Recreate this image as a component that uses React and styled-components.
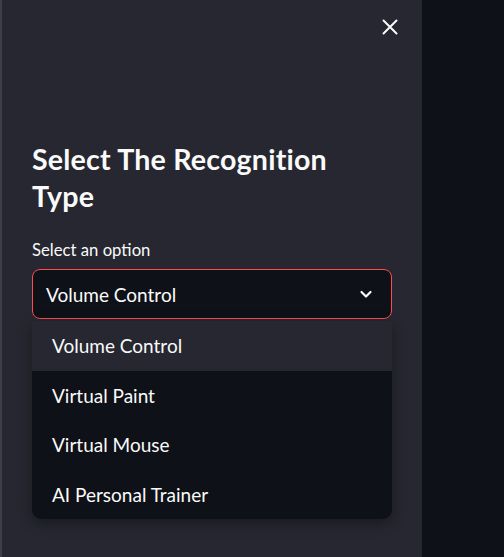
import styled, { createGlobalStyle } from "styled-components";

const Global = createGlobalStyle`
  html, body {
    margin: 0;
    padding: 0;
    background: #0e1117;
  }
  body {
    font-family: "Lato", "Noto Sans", sans-serif;
    color: #fafafa;
  }
`;

const options = ["Volume Control", "Virtual Paint", "Virtual Mouse", "AI Personal Trainer"];

export default function App() {
  return (
    <>
      <Global />
      <Page>
        <Edge />
        <Sidebar>
          <CloseRow>
            <CloseButton aria-label="close">
              <svg width="18" height="18" viewBox="0 0 18 18">
                <path d="M2.5 2.5 L15.5 15.5 M15.5 2.5 L2.5 15.5" stroke="#fafafa" strokeWidth="2" strokeLinecap="round" />
              </svg>
            </CloseButton>
          </CloseRow>
          <Title>Select The Recognition Type</Title>
          <Label>Select an option</Label>
          <SelectWrap>
            <Select>
              <span>Volume Control</span>
              <svg width="16" height="16" viewBox="0 0 16 16">
                <path d="M3.5 6 L8 10.5 L12.5 6" stroke="#fafafa" strokeWidth="2.2" fill="none" strokeLinecap="round" strokeLinejoin="round" />
              </svg>
            </Select>
            <Menu>
              {options.map((o, i) => (
                <Option key={o} $active={i === 0}>{o}</Option>
              ))}
            </Menu>
          </SelectWrap>
        </Sidebar>
        <Main />
      </Page>
    </>
  );
}

const Page = styled.div`
  display: flex;
  width: 504px;
  height: 557px;
  overflow: hidden;
`;

const Edge = styled.div`
  width: 2px;
  background: #3d3e46;
`;

const Sidebar = styled.div`
  width: 420px;
  background: #262730;
  padding: 0 30px 0 30px;
  box-sizing: border-box;
  display: flex;
  flex-direction: column;
`;

const CloseRow = styled.div`
  display: flex;
  justify-content: flex-end;
  padding-top: 18px;
  margin-right: -7px;
`;

const CloseButton = styled.div`
  width: 18px;
  height: 18px;
  display: flex;
`;

const Title = styled.h2`
  margin: 105px 0 0 0;
  max-width: 330px;
  font-size: 28.6px;
  font-weight: 700;
  line-height: 37px;
  letter-spacing: 0.2px;
`;

const Label = styled.div`
  margin-top: 25px;
  font-size: 16.7px;
  line-height: 20px;
`;

const SelectWrap = styled.div`
  margin-top: 9px;
  position: relative;
`;

const Select = styled.div`
  height: 50px;
  box-sizing: border-box;
  border: 1px solid #ff4b4b;
  border-radius: 8px;
  background: #0e1117;
  display: flex;
  align-items: center;
  justify-content: space-between;
  padding: 0 17px 0 13px;
  font-size: 19px;
`;

const Menu = styled.div`
  position: absolute;
  top: 52px;
  left: 0;
  right: 0;
  background: #0e1117;
  border-radius: 0 0 10px 10px;
  overflow: hidden;
  box-shadow: 0 4px 14px rgba(0, 0, 0, 0.35);
`;

const Option = styled.div`
  height: 49.5px;
  display: flex;
  align-items: center;
  padding-left: 20px;
  font-size: 19px;
  background: ${(p) => (p.$active ? "#262730" : "#0e1117")};
`;

const Main = styled.div`
  flex: 1;
  background: #0e1117;
`;
